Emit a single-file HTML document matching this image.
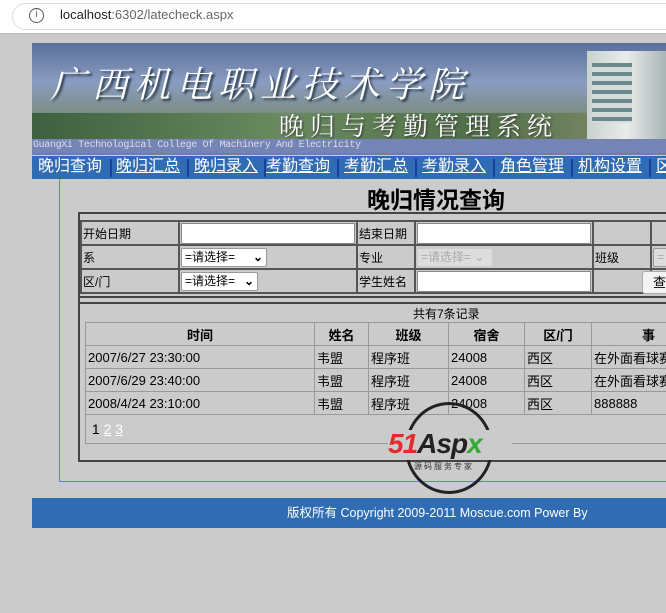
<!DOCTYPE html>
<html><head><meta charset="utf-8"><style>
*{margin:0;padding:0;box-sizing:border-box}
body{width:666px;height:613px;overflow:hidden;background:#cbcbcb;font-family:"Liberation Sans","Noto Sans CJK SC",sans-serif;position:relative;font-size:13px;color:#000}
.a{position:absolute}
#bar{left:0;top:0;width:666px;height:34px;background:#fff;border-bottom:1px solid #bbb}
#addr{left:12px;top:3px;width:680px;height:27px;border:1px solid #ddd;border-radius:14px;background:#fff}
#banner{left:32px;top:43px;width:634px;height:112px;background:linear-gradient(180deg,#5a6f9a 0%,#8a9cc0 35%,#7e8f8a 60%,#5d7a55 80%,#6d80a8 100%);overflow:hidden}
#nav{left:32px;top:156px;width:634px;height:23px;background:#2f6cb3}
.n{position:absolute;top:1px;color:#fff;font-size:16px;text-decoration:underline;white-space:nowrap;line-height:20px}
.s{position:absolute;top:3px;width:2px;height:18px;background:#1a3ea0}
#box{left:59px;top:179px;width:620px;height:303px;border-left:1px solid #5b7fe0;border-bottom:1px solid #5b7fe0}
table{border-collapse:collapse;position:absolute;table-layout:fixed}
td{border:2px solid #555;font-size:12px;padding:0 1px;height:24px;white-space:nowrap;overflow:hidden}
.inp{background:#fff;border:1px solid #888;height:21px}
.sel{background:#fff;border:1px solid #999;border-radius:2px;height:19px;font-size:12px;line-height:17px;padding-left:3px;display:inline-block}
#res td{border:1px solid #999;font-size:13px;height:23px;padding:0 2px}
#res th{border:1px solid #999;font-size:13px;height:23px;font-weight:bold;overflow:hidden}
#foot{left:32px;top:498px;width:634px;height:30px;background:#2f6cb3;color:#fff;font-size:12.5px;line-height:30px}
</style></head><body>
<div id="bar" class="a"><div id="addr" class="a"></div>
<div class="a" style="left:29px;top:8px;width:15px;height:15px;border:1.5px solid #555;border-radius:50%;font-size:10px;line-height:12px;text-align:center;color:#555">i</div>
<div class="a" style="left:60px;top:7px;font-size:13px;color:#222">localhost<span style="color:#666">:6302/latecheck.aspx</span></div></div>
<div id="banner" class="a">
<div class="a" style="left:0;top:70px;width:634px;height:30px;background:linear-gradient(90deg,#3f6040,#6a8a60 40%,#506f48 70%,#8a9070)"></div>
<div class="a" style="left:555px;top:8px;width:79px;height:95px;background:linear-gradient(90deg,#c9d2cf,#e8eceb,#aab5b5)"></div>
<div class="a" style="left:560px;top:20px;width:40px;height:60px;background:repeating-linear-gradient(180deg,#6c8a8c 0 4px,#d6dcdc 4px 9px)"></div>
<div class="a" style="left:18px;top:14px;font-family:'Noto Serif CJK SC',serif;font-size:36px;color:#fff;letter-spacing:6px;font-style:italic;text-shadow:2px 2px 2px #234">广西机电职业技术学院</div>
<div class="a" style="left:247px;top:64px;font-family:'Noto Serif CJK SC',serif;font-size:25px;color:#fff;letter-spacing:6px;text-shadow:1px 1px 2px #333">晚归与考勤管理系统</div>
<div class="a" style="left:0;top:96px;width:634px;height:14px;background:#7484b4"></div>
<div class="a" style="left:1px;top:96px;font-family:'Liberation Mono',monospace;font-size:10px;color:#dde;line-height:14px;letter-spacing:-0.35px">GuangXi Technological College Of Machinery And Electricity</div>
</div>
<div id="nav" class="a">
<span class="n" style="left:6px;text-decoration:none">晚归查询</span><span class="s" style="left:78px"></span>
<span class="n" style="left:84px">晚归汇总</span><span class="s" style="left:155px"></span>
<span class="n" style="left:162px">晚归录入</span><span class="s" style="left:232px"></span>
<span class="n" style="left:234px">考勤查询</span><span class="s" style="left:305px"></span>
<span class="n" style="left:312px">考勤汇总</span><span class="s" style="left:383px"></span>
<span class="n" style="left:390px">考勤录入</span><span class="s" style="left:461px"></span>
<span class="n" style="left:468px">角色管理</span><span class="s" style="left:539px"></span>
<span class="n" style="left:546px">机构设置</span><span class="s" style="left:617px"></span>
<span class="n" style="left:624px">区</span>
</div>
<div id="box" class="a"></div>
<div class="a" style="left:367px;top:181px;font-size:23px;font-weight:bold">晚归情况查询</div>
<div class="a" style="left:78px;top:212px;width:600px;height:250px;border:2px solid #444"></div>
<div class="a" style="left:78px;top:296px;width:600px;height:8px;border-top:2px solid #444;border-bottom:2px solid #444"></div>
<table style="left:80px;top:220px;width:630px">
<colgroup><col style="width:98px"><col style="width:178px"><col style="width:58px"><col style="width:178px"><col style="width:58px"><col style="width:60px"></colgroup>
<tr><td>开始日期</td><td><div class="inp" style="width:174px"></div></td><td>结束日期</td><td><div class="inp" style="width:174px"></div></td><td></td><td></td></tr>
<tr><td style="height:23px">系</td><td><span class="sel" style="width:86px">=请选择= <b style="float:right;margin-right:3px">⌄</b></span></td><td>专业</td><td><span class="sel" style="width:76px;color:#aaa;background:#ddd;border-color:#ccc">=请选择= ⌄</span></td><td>班级</td><td><span class="sel" style="width:30px;color:#aaa;background:#ddd">=</span></td></tr>
<tr><td>区/门</td><td><span class="sel" style="width:77px">=请选择= <b style="float:right;margin-right:3px">⌄</b></span></td><td>学生姓名</td><td><div class="inp" style="width:174px"></div></td><td></td><td></td></tr>
</table>
<div class="a" style="left:642px;top:271px;width:50px;height:23px;background:#f4f4f4;border:1px solid #aaa;border-radius:3px;font-size:13px;line-height:21px;padding-left:10px;white-space:nowrap">查询</div>
<div class="a" style="left:413px;top:305px;font-size:12px">共有7条记录</div>
<table id="res" style="left:85px;top:322px;width:620px">
<colgroup><col style="width:229px"><col style="width:54px"><col style="width:80px"><col style="width:76px"><col style="width:67px"><col style="width:114px"></colgroup>
<tr><th>时间</th><th>姓名</th><th>班级</th><th>宿舍</th><th>区/门</th><th>事</th></tr>
<tr><td>2007/6/27 23:30:00</td><td>韦盟</td><td>程序班</td><td>24008</td><td>西区</td><td>在外面看球赛</td></tr>
<tr><td>2007/6/29 23:40:00</td><td>韦盟</td><td>程序班</td><td>24008</td><td>西区</td><td>在外面看球赛</td></tr>
<tr><td>2008/4/24 23:10:00</td><td>韦盟</td><td>程序班</td><td>24008</td><td>西区</td><td>888888</td></tr>
<tr><td colspan="6" style="height:29px;font-size:14px">&nbsp;1 <u style="color:#fff">2</u> <u style="color:#fff">3</u></td></tr>
</table>
<div class="a" style="left:405px;top:402px;width:88px;height:92px;border:3px solid #222;border-radius:50%"></div>
<div class="a" style="left:388px;top:430px;width:124px;height:30px;background:#cbcbcb"></div>
<div class="a" style="left:388px;top:428px;font-size:28px;font-weight:bold;font-style:italic;letter-spacing:-1px"><span style="color:#e52b2b">51</span><span style="color:#222">Asp</span><span style="color:#3a3">x</span></div>
<div class="a" style="left:414px;top:461px;font-size:8px;color:#333;letter-spacing:2px">源码服务专家</div>
<div id="foot" class="a"><span style="position:absolute;left:255px">版权所有 Copyright 2009-2011 Moscue.com Power By</span></div>
</body></html>
